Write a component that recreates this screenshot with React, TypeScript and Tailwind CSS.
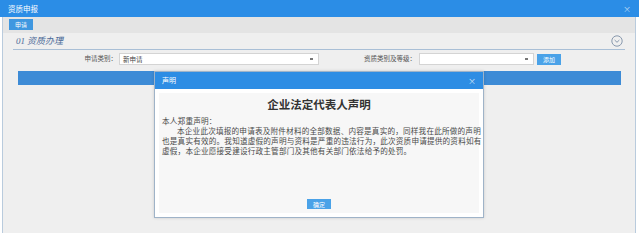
import React from 'react';

const cjk = { fontFamily: '"Noto Sans CJK SC", "Noto Sans", sans-serif' };

const ChevronCircle: React.FC = () => (
  <svg width="12" height="12" viewBox="0 0 12 12" fill="none">
    <circle cx="6" cy="6" r="5.2" stroke="#7d8fa6" strokeWidth="0.9" />
    <path d="M3.6 5 L6 7.3 L8.4 5" stroke="#7d8fa6" strokeWidth="0.9" />
  </svg>
);

const Select: React.FC<{ value?: string; width: string }> = ({ value, width }) => (
  <div className={`${width} h-[12px] bg-white border border-[#d4d4d4] flex items-center justify-between pl-[3px] pr-[5px]`}>
    <span className="text-[6.5px] text-[#444] leading-none">{value}</span>
    <span className="w-[3px] h-[2px] bg-[#777]" />
  </div>
);

const DeclarationModal: React.FC = () => (
  <div className="absolute left-[154px] top-[71px] w-[330px] h-[147px] flex flex-col border border-[#9fb3c8] bg-white shadow-[0_0_3px_rgba(0,0,0,0.15)]">
    <div className="h-[17px] bg-[#2d8de4] flex items-center justify-between px-[7px] text-white">
      <span className="text-[7px]">声明</span>
      <span className="text-[8px] text-[#cfe3f7]">×</span>
    </div>
    <div className="flex-1 p-[4px]">
      <div className="h-full bg-[#f7f7f7] flex flex-col">
        <div className="text-center font-bold text-[11.5px] text-[#333] mt-[5px] leading-[13px]">企业法定代表人声明</div>
        <div className="text-[7.6px] tracking-[0.2px] text-[#4a4a4a] leading-[10px] pl-[3px] mt-[5px] whitespace-nowrap">
          <div>本人郑重声明：</div>
          <div className="pl-[15px]">本企业此次填报的申请表及附件材料的全部数据、内容是真实的，同样我在此所做的声明</div>
          <div>也是真实有效的。我知道虚假的声明与资料是严重的违法行为，此次资质申请提供的资料如有</div>
          <div>虚假，本企业愿接受建设行政主管部门及其他有关部门依法给予的处罚。</div>
        </div>
        <div className="flex-1" />
        <div className="flex justify-center mb-[4px]">
          <div className="w-[24px] h-[10px] bg-[#4aa2e8] text-white text-[6px] flex items-center justify-center">确定</div>
        </div>
      </div>
    </div>
  </div>
);

const App: React.FC = () => {
  return (
    <div className="relative w-[639px] h-[240px] bg-white overflow-hidden" style={cjk}>
      <div className="h-[17px] bg-[#2b8de6] flex items-center justify-between pl-[8px] pr-[8px] text-white">
        <span className="text-[7.5px]">资质申报</span>
        <span className="text-[8px] text-[#bcd9f5]">×</span>
      </div>
      <div className="ml-[2px] w-[634px] h-[216px] border-l border-r border-[#b9cbdd] flex flex-col">
        <div className="h-[16px] bg-[#e4e4e4] pl-[6px] pt-[2px]">
          <div className="w-[24px] h-[11px] bg-[#3f97e0] text-white text-[6px] flex items-center justify-center">申请</div>
        </div>
        <div className="flex-1 bg-[#efefef] flex flex-col">
          <div className="mx-[10px] h-[17px] border-b border-[#a9bfd6] flex items-center justify-between pl-[3px] pr-[2px]">
            <span className="text-[9px] italic text-[#4d6c99]">
              <span style={{ fontFamily: '"Liberation Serif", serif' }}>01</span> 资质办理
            </span>
            <ChevronCircle />
          </div>
          <div className="flex items-center mt-[3px] h-[12px]">
            <span className="w-[116px] text-right text-[6.5px] text-[#555] pr-[2px]">申请类别：</span>
            <Select value="新申请" width="w-[200px]" />
            <span className="w-[100px] text-right text-[6.5px] text-[#555] pr-[3px]">资质类别及等级：</span>
            <Select width="w-[115px]" />
            <div className="ml-[3px] w-[24px] h-[11px] bg-[#4aa2e8] text-white text-[6px] flex items-center justify-center">添加</div>
          </div>
          <div className="ml-[15px] w-[603px] h-[14px] bg-[#3d8bd6] mt-[6px]" />
        </div>
      </div>
      <DeclarationModal />
    </div>
  );
};

export default App;
